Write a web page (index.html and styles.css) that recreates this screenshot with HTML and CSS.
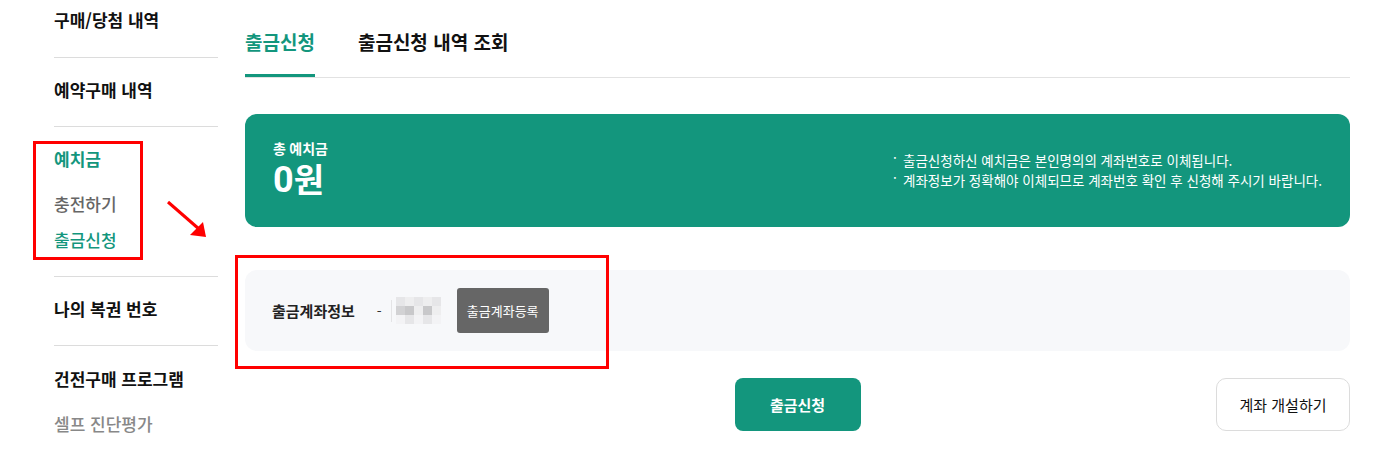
FILE: index.html
```html
<!DOCTYPE html>
<html lang="ko">
<head>
<meta charset="utf-8">
<title>출금신청</title>
<link rel="stylesheet" href="styles.css">
</head>
<body>
<div class="page">
  <aside class="side">
    <div class="side-group first"><a class="side-title">구매/당첨 내역</a></div>
    <div class="side-group"><a class="side-title">예약구매 내역</a></div>
    <div class="side-group">
      <a class="side-title green">예치금</a>
      <ul class="side-sub">
        <li class="sub-gray">충전하기</li>
        <li class="sub-green">출금신청</li>
      </ul>
    </div>
    <div class="side-group"><a class="side-title">나의 복권 번호</a></div>
    <div class="side-group last">
      <a class="side-title">건전구매 프로그램</a>
      <ul class="side-sub">
        <li class="sub-light">셀프 진단평가</li>
      </ul>
    </div>
  </aside>

  <main class="main">
    <nav class="tabs">
      <a class="tab active">출금신청</a>
      <a class="tab">출금신청 내역 조회</a>
    </nav>

    <section class="balance">
      <div class="balance-left">
        <div class="balance-label">총 예치금</div>
        <div class="balance-amount"><span class="num">0</span>원</div>
      </div>
      <ul class="balance-notes">
        <li>출금신청하신 예치금은 본인명의의 계좌번호로 이체됩니다.</li>
        <li>계좌정보가 정확해야 이체되므로 계좌번호 확인 후 신청해 주시기 바랍니다.</li>
      </ul>
    </section>

    <section class="account">
      <span class="account-label">출금계좌정보</span>
      <span class="account-dash">-</span>
      <span class="account-blur">
        <i class="bar"></i>
        <span class="pix">
          <i class="p1"></i><i class="p2"></i><i class="p1"></i><i class="p2"></i><i class="p1"></i>
          <i class="p3"></i><i class="p4"></i><i class="p2"></i><i class="p4"></i><i class="p2"></i>
          <i class="p0"></i><i class="p1"></i><i class="p0"></i><i class="p1"></i><i class="p0"></i>
        </span>
      </span>
      <button class="btn-register">출금계좌등록</button>
    </section>

    <div class="actions">
      <span></span>
      <button class="btn-submit">출금신청</button>
      <button class="btn-open">계좌 개설하기</button>
    </div>
  </main>
</div>

<div class="mark mark-side"></div>
<div class="mark mark-account"></div>
<svg class="mark-arrow" width="50" height="44" viewBox="0 0 50 44">
  <line x1="2" y1="2" x2="33" y2="29" stroke="#ff0000" stroke-width="3"/>
  <polygon points="40,37 24,35 37,22" fill="#ff0000"/>
</svg>
</body>
</html>
```

FILE: styles.css
```css
* { box-sizing: border-box; }
html, body { margin: 0; padding: 0; background: #fff; }
body {
  font-family: "Noto Sans CJK KR", "Noto Sans", sans-serif;
  color: #111;
  width: 1393px;
  height: 451px;
  overflow: hidden;
  position: relative;
}
ul { list-style: none; margin: 0; padding: 0; }
button { font-family: inherit; cursor: pointer; }

.page {
  display: flex;
  align-items: flex-start;
}

/* sidebar */
.side {
  width: 218px;
  padding-left: 54px;
  flex-shrink: 0;
}
.side-group {
  border-bottom: 1px solid #dcdcdc;
  padding: 22px 0 26px;
}
.side-group.first { padding-top: 10px; padding-bottom: 27px; }
.side-group.last { border-bottom: none; padding-top: 23px; }
.side-title {
  display: block;
  font-size: 17px;
  font-weight: 700;
  line-height: 20px;
  color: #111;
}
.side-title.green { color: #13967d; }
.side-sub { margin-top: 25px; }
.side-sub li {
  font-size: 17px;
  line-height: 20px;
  font-weight: 500;
}
.side-sub li + li { margin-top: 16px; }
.sub-gray { color: #666; }
.sub-green { color: #13967d; }
.sub-light { color: #888; }

/* main */
.main {
  width: 1105px;
  margin-left: 27px;
}
.tabs {
  display: flex;
  gap: 43px;
  border-bottom: 1px solid #e2e2e2;
  height: 78px;
}
.tab {
  font-size: 19px;
  font-weight: 700;
  line-height: 24px;
  padding-top: 30px;
  height: 77px;
  color: #111;
}
.tab.active {
  color: #13967d;
  border-bottom: 3px solid #13967d;
}

.balance {
  margin-top: 36px;
  height: 113px;
  background: #13967d;
  border-radius: 12px;
  display: flex;
  justify-content: space-between;
  align-items: center;
  padding: 0 28px;
  color: #fff;
}
.balance-left { padding-bottom: 1px; }
.balance-label {
  font-family: Roboto, "Noto Sans CJK KR", sans-serif;
  font-size: 14px;
  font-weight: 700;
  line-height: 18px;
}
.balance-amount {
  font-family: Roboto, "Noto Sans CJK KR", sans-serif;
  font-size: 33px;
  font-weight: 700;
  line-height: 40px;
  margin-top: 2px;
}
.balance-amount .num { font-size: 36px; }
.balance-notes {
  font-size: 13.5px;
  line-height: 20px;
  padding-bottom: 2px;
}
.balance-notes li {
  position: relative;
  padding-left: 10px;
}
.balance-notes li::before {
  content: "·";
  position: absolute;
  left: 0;
  top: -3px;
}

.account {
  margin-top: 43px;
  height: 81px;
  background: #f7f8fa;
  border-radius: 12px;
  display: flex;
  align-items: center;
  padding-left: 27px;
}
.account-label {
  font-size: 15px;
  font-weight: 700;
  color: #222;
}
.account-dash {
  margin-left: 22px;
  font-size: 14px;
  color: #333;
}
.account-blur {
  display: flex;
  align-items: center;
  margin-left: 9px;
}
.account-blur .bar {
  width: 1px;
  height: 22px;
  background: #e4e4e6;
  margin-right: 4px;
}
.pix {
  display: grid;
  grid-template-columns: repeat(5, 9px);
  grid-template-rows: repeat(3, 9px);
}
.pix i { display: block; }
.pix .p0 { background: #f3f3f5; }
.pix .p1 { background: #e6e6e8; }
.pix .p2 { background: #eeeeef; }
.pix .p3 { background: #d2d2d4; }
.pix .p4 { background: #c8c8ca; }
.btn-register {
  margin-left: 16px;
  width: 92px;
  height: 45px;
  border: none;
  border-radius: 3px;
  background: #666;
  color: #fff;
  font-size: 13px;
}

.actions {
  margin-top: 27px;
  display: grid;
  grid-template-columns: 1fr auto 1fr;
  align-items: center;
}
.btn-submit {
  width: 126px;
  height: 53px;
  border: none;
  border-radius: 8px;
  background: #13967d;
  color: #fff;
  font-size: 15px;
  font-weight: 700;
}
.btn-open {
  justify-self: end;
  width: 134px;
  height: 53px;
  background: #fff;
  border: 1px solid #dcdcdc;
  border-radius: 10px;
  color: #111;
  font-size: 15px;
}

/* annotation overlays */
.mark {
  position: absolute;
  border: 3px solid #ff0000;
  pointer-events: none;
}
.mark-side { left: 33px; top: 141px; width: 110px; height: 119px; }
.mark-account { left: 235px; top: 255px; width: 374px; height: 114px; }
.mark-arrow { position: absolute; left: 166px; top: 200px; }
```
